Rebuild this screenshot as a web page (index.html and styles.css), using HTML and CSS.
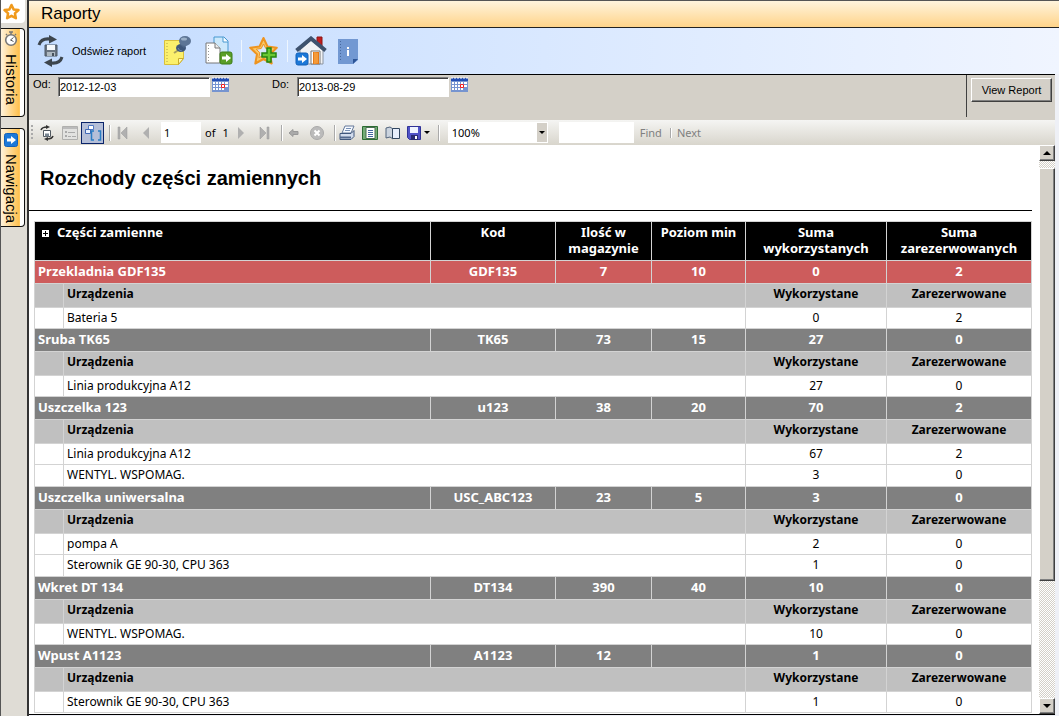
FILE: index.html
```
<!DOCTYPE html>
<html lang="pl">
<head>
    <meta charset="UTF-8">
    <meta name="viewport" content="width=device-width, initial-scale=1.0">
    <title>Raporty</title>
    <link rel="stylesheet" href="styles.css">
</head>
<body>
    <div class="app">
        <nav class="side">
            <button type="button" class="fav" aria-label="Ulubione">
                <svg width="20" height="18" viewBox="0 0 20 18"><path d="M9.500 2l2.100 4.400 4.900.6-3.600 3.300 1 4.900-4.400-2.400-4.400 2.400 1-4.900L2.500 7l4.900-.6z" fill="#fff" stroke="#f09a1c" stroke-width="2.500" stroke-linejoin="round"/></svg>
            </button>
            <button type="button" class="tab">
                <svg width="14" height="16" viewBox="0 0 14 16"><path d="M5 1h4M7 1v3M2 3l1 1M12 3l-1 1" stroke="#777" stroke-width="1.500"/><circle cx="7" cy="9" r="5.300" fill="#fff" stroke="#777" stroke-width="1.600"/><path d="M9.500 6.500L6.500 9l3 1.500" fill="none" stroke="#555"/></svg>
                <span>Historia</span>
            </button>
            <button type="button" class="tab">
                <svg width="14" height="14" viewBox="0 0 14 14"><rect x=".5" y=".5" width="13" height="13" rx="2" fill="#1c78d8" stroke="#1360b8"/><path d="M3 5.500h4V3l5 4-5 4V8.500H3z" fill="#fff"/></svg>
                <span>Nawigacja</span>
            </button>
        </nav>
        <div class="main">
            <h1 class="title">Raporty</h1>
            <div class="actions">
                <button type="button" class="refresh">
                    <svg width="28" height="32" viewBox="0 0 28 32">
                        <path d="M2 10Q4 3 13 4" fill="none" stroke="#3c454d" stroke-width="3"/><path d="M12 0l8 4.500-8 4z" fill="#3c454d"/>
                        <path d="M25 22q-2 7-11 6" fill="none" stroke="#3c454d" stroke-width="3"/><path d="M15 32l-8-4.500 8-4z" fill="#3c454d"/>
                        <path d="M8 10h12v11H8z" fill="#687380" stroke="#4c5864"/><path d="M10 10h8v5h-8z" fill="#f4f8fb"/><path d="M10 17h8v4h-8z" fill="#aeb9c2"/><path d="M15 18h2v3h-2z" fill="#46515c"/>
                    </svg>
                    <span>Odśwież raport</span>
                </button>
                <button type="button" class="act note" aria-label="Notatka">
                    <svg width="30" height="32" viewBox="0 0 30 32">
                        <path d="M.5 5.500h19v18l-5 6H.5z" fill="#fbf06c" stroke="#d8bf3c"/><path d="M19.500 23.500h-5v6z" fill="#fff9b0" stroke="#c9ac2d"/>
                        <path d="M3 8v20" stroke="#b8a345" stroke-dasharray="1 2"/>
                        <path d="M10 18l6-4" stroke="#aaa25c" stroke-width="2"/><ellipse cx="17" cy="13" rx="5" ry="4" fill="#3f577a"/><path d="M16 10l1-6 7 5-4 4z" fill="#4e6688"/><ellipse cx="21" cy="6" rx="6" ry="5" fill="#5d7596"/><ellipse cx="20" cy="4" rx="3" ry="1.500" fill="#9bb0c8"/><path d="M14 13q1 3 4 3" fill="none" stroke="#6f87a8"/>
                    </svg>
                </button>
                <button type="button" class="act" aria-label="Eksport">
                    <svg width="28" height="30" viewBox="0 0 28 30">
                        <path d="M9 1h10l4 4v17H9z" fill="#cce8fb" stroke="#4798d0"/><path d="M18 1v5h5" fill="#fff" stroke="#4798d0"/>
                        <path d="M1 7h9l5 5v15H1z" fill="#fff" stroke="#777"/><path d="M10 7v5h5" fill="#eee" stroke="#777"/><path d="M3.500 9v16" stroke="#999" stroke-dasharray="1 2"/>
                        <rect x="15" y="16" width="12" height="12" rx="2" fill="#5a9e28" stroke="#3d7d18"/><path d="M17 20.500h4V18l5 4-5 4v-2.500h-4z" fill="#fff"/>
                    </svg>
                </button>
                <i class="split"></i>
                <button type="button" class="act" aria-label="Dodaj do ulubionych">
                    <svg width="30" height="30" viewBox="0 0 30 30">
                        <path d="M14.500 2l4 8.500 9.300 1.200-6.800 6.500 1.700 9.300-8.200-4.500-8.200 4.500L8 18.200l-6.800-6.500 9.300-1.200z" fill="#fbc868" stroke="#ee9420" stroke-width="2" stroke-linejoin="round"/>
                        <path d="M14.500 8l2.300 4.500 5 .7-3.600 3.500.9 5-4.600-2.400-4.600 2.400.9-5-3.600-3.500 5-.7z" fill="#d8e8fa" stroke="#ee9420"/>
                        <path d="M18 12h4v5h5v4h-5v5h-4v-5h-5v-4h5z" fill="#69c832" stroke="#268313" stroke-width="1.500"/>
                    </svg>
                </button>
                <i class="split"></i>
                <button type="button" class="act home" aria-label="Strona główna">
                    <svg width="32" height="30" viewBox="0 0 32 30">
                        <path d="M22 1h5v9h-5z" fill="#c31d1d" stroke="#8b1616"/><path d="M5 14L16 4l12 10v14H5z" fill="#f1f2f5" stroke="#8b94a0"/>
                        <path d="M1.500 14.500L16 2.500l14.500 12" fill="none" stroke="#3e526e" stroke-width="4"/>
                        <path d="M16 15h9v13h-9z" fill="#fff" stroke="#777"/><path d="M18 16h6v12h-6z" fill="#e67a16"/><path d="M19 16l4 1v10l-4 1z" fill="#f49a39"/>
                        <rect x="1" y="17" width="12" height="12" rx="2" fill="#1c78d8" stroke="#1360b8"/><path d="M3 21.500h4V19l5 4-5 4v-2.500H3z" fill="#fff"/>
                    </svg>
                </button>
                <button type="button" class="act" aria-label="Informacje">
                    <svg width="20" height="27" viewBox="0 0 20 27"><path d="M0 1h20v21l-5 4H0z" fill="#7298d2"/><path d="M20 21h-5v5z" fill="#2d5597"/><path d="M2.500 3v21" stroke="#47699e" stroke-dasharray="1 2"/><path d="M9 9h2v2H9zM9 12h2v6H9z" fill="#fff"/></svg>
                </button>
            </div>
            <div class="viewer">
                <form class="params">
                    <div class="fields">
                        <label for="from">Od:</label>
                        <input type="text" id="from" value="2012-12-03">
                        <svg width="17" height="15" viewBox="0 0 17 15"><path d="M0 2h17v13H0z" fill="#7694d0"/><path d="M0 1h17v3H0z" fill="#244fb5"/><path d="M1 0v2M4 0v2M7 0v2M10 0v2M13 0v2M16 0v2" stroke="#fff"/><path d="M1 5h2v2H1zM4 5h2v2H4zM7 5h2v2H7zM10 5h2v2h-2zM13 5h3v2h-3zM1 8h2v2H1zM4 8h2v2H4zM7 8h2v2H7zM13 8h3v2h-3zM1 11h2v2H1zM4 11h2v2H4zM7 11h2v2H7zM10 11h2v2h-2z" fill="#fff"/><path d="M9.500 7.500h3v3h-3z" fill="#fff" stroke="#f02020"/></svg>
                        <label for="to" class="second">Do:</label>
                        <input type="text" id="to" value="2013-08-29">
                        <svg width="17" height="15" viewBox="0 0 17 15"><path d="M0 2h17v13H0z" fill="#7694d0"/><path d="M0 1h17v3H0z" fill="#244fb5"/><path d="M1 0v2M4 0v2M7 0v2M10 0v2M13 0v2M16 0v2" stroke="#fff"/><path d="M1 5h2v2H1zM4 5h2v2H4zM7 5h2v2H7zM10 5h2v2h-2zM13 5h3v2h-3zM1 8h2v2H1zM4 8h2v2H4zM7 8h2v2H7zM13 8h3v2h-3zM1 11h2v2H1zM4 11h2v2H4zM7 11h2v2H7zM10 11h2v2h-2z" fill="#fff"/><path d="M9.500 7.500h3v3h-3z" fill="#fff" stroke="#f02020"/></svg>
                    </div>
                    <div class="submit">
                        <button type="button">View Report</button>
                    </div>
                </form>
                <div class="toolbar">
                    <i class="grip"></i>
                    <button type="button" class="tool" aria-label="Refresh">
                        <svg width="16" height="16" viewBox="0 0 16 16"><path d="M2 5q1-3 6-3M14 11q-1 3-6 3" fill="none" stroke="#333" stroke-width="1.500"/><path d="M7 0l4 2-4 2zM9 12l-4 2 4 2z" fill="#333"/><path d="M4.500 5.500h7v6h-7z" fill="#fff" stroke="#50585f"/><path d="M6 8.500h4v3H6z" fill="#788590"/></svg>
                    </button>
                    <button type="button" class="tool" aria-label="Document map">
                        <svg width="16" height="16" viewBox="0 0 16 16"><path d="M.5 1.500h15v13H.5z" fill="#e2e2e0" stroke="#b0b0ae"/><path d="M1 2h14v2H1z" fill="#bbb"/><path d="M3 6h2v2H3zM3 10h2v2H3z" fill="#aaa"/><path d="M6 7.500h7M6 11.500h3M10 11.500h4" stroke="#aaa"/></svg>
                    </button>
                    <button type="button" class="tool pressed" aria-label="Parameters">
                        <svg width="18" height="18" viewBox="0 0 18 18"><path d="M4.500 1.500h5v4h-5z" fill="#fff" stroke="#537bc5"/><path d="M1.500 5.500h5v4h-5z" fill="#e7f0ff" stroke="#4169b5"/><path d="M10 7H7.500v9H10M14 7h2.500v9H14" fill="none" stroke="#2a7dc4" stroke-width="1.500"/></svg>
                    </button>
                    <i class="bar"></i>
                    <button type="button" class="tool" aria-label="First page"><svg width="16" height="14" viewBox="0 0 16 14"><path d="M3 1h2v12H3zM12 1v12L6 7z" fill="#b0b0b0" stroke="#999" stroke-width=".5"/></svg></button>
                    <button type="button" class="tool" aria-label="Previous page"><svg width="16" height="14" viewBox="0 0 16 14"><path d="M11 1v12L5 7z" fill="#b0b0b0"/></svg></button>
                    <input type="text" class="page" value="1" aria-label="Page">
                    <span class="of">of</span>
                    <span class="count">1</span>
                    <button type="button" class="tool" aria-label="Next page"><svg width="16" height="14" viewBox="0 0 16 14"><path d="M5 1v12l6-6z" fill="#b0b0b0"/></svg></button>
                    <button type="button" class="tool" aria-label="Last page"><svg width="16" height="14" viewBox="0 0 16 14"><path d="M4 1v12l6-6zM11 1h2v12h-2z" fill="#b0b0b0" stroke="#999" stroke-width=".5"/></svg></button>
                    <i class="bar"></i>
                    <button type="button" class="tool" aria-label="Back"><svg width="16" height="14" viewBox="0 0 16 14"><path d="M3 7l4-3.500V5.500h5v3H7v2z" fill="#aaa" stroke="#999"/></svg></button>
                    <button type="button" class="tool" aria-label="Stop"><svg width="16" height="16" viewBox="0 0 16 16"><circle cx="8" cy="8" r="6.500" fill="#bbb" stroke="#aaa"/><path d="M5.500 5.500l5 5M10.500 5.500l-5 5" stroke="#fff" stroke-width="2"/></svg></button>
                    <i class="bar"></i>
                    <button type="button" class="tool" aria-label="Print"><svg width="16" height="16" viewBox="0 0 16 16"><path d="M6 1h9l-3 7H3z" fill="#f5f9ff" stroke="#65799a"/><path d="M7 3.500h5M6 5.500h5" stroke="#7890b5"/><path d="M1 8.500h11l3-3v6l-3 3H1z" fill="#d2dced" stroke="#40577d"/><path d="M1 11.500h11v2H1z" fill="#52688d"/></svg></button>
                    <button type="button" class="tool" aria-label="Print layout"><svg width="16" height="16" viewBox="0 0 16 16"><path d="M.5 1.500h15v13H.5z" fill="#74ad77" stroke="#2c6c33"/><path d="M4 2.500h9v11H4z" fill="#fff" stroke="#496c51"/><path d="M6 5.500h5M6 7.500h5M6 9.500h5M6 11.500h5" stroke="#4467a0"/></svg></button>
                    <button type="button" class="tool" aria-label="Page setup"><svg width="16" height="14" viewBox="0 0 16 14"><path d="M1 2l4-1 3 2v10l-3-2-4 1z" fill="#cbd4df" stroke="#52647c"/><path d="M7.500 2.500h7v10h-7z" fill="#e6eefc" stroke="#31465f"/></svg></button>
                    <button type="button" class="tool export" aria-label="Export">
                        <svg width="14" height="14" viewBox="0 0 14 14"><path d="M.5.5h13v13h-11l-2-2z" fill="#5053c7" stroke="#303397"/><path d="M3 1h8v6H3z" fill="#eff4ff"/><path d="M4 9h7v5H4z" fill="#292c72"/><path d="M8 10h2v3H8z" fill="#fff"/></svg>
                        <svg width="6" height="4" viewBox="0 0 6 4"><path d="M0 0h6L3 3z"/></svg>
                    </button>
                    <i class="bar last"></i>
                    <div class="zoom">
                        <select aria-label="Zoom"><option>100%</option></select>
                        <span class="arrow"><svg width="6" height="4" viewBox="0 0 6 4"><path d="M0 0h6L3 3z"/></svg></span>
                    </div>
                    <input type="text" class="search" aria-label="Find text">
                    <a href="#">Find</a>
                    <i class="thin"></i>
                    <a href="#">Next</a>
                </div>
                <div class="body">
                    <div class="report">
                        <h2>Rozchody części zamiennych</h2>
                        <table>
                            <colgroup>
                                <col class="indent"><col><col class="code"><col class="stock"><col class="minimum"><col class="used"><col class="reserved">
                            </colgroup>
                            <thead>
                                <tr>
                                    <th colspan="2" class="name"><svg width="7" height="7" viewBox="0 0 7 7"><path d="M0 0h7v7H0z" fill="#fff"/><path d="M1 3h5v1H1zM3 1h1v5H3z"/></svg>Części zamienne</th>
                                    <th>Kod</th>
                                    <th>Ilość w magazynie</th>
                                    <th>Poziom min</th>
                                    <th>Suma wykorzystanych</th>
                                    <th>Suma zarezerwowanych</th>
                                </tr>
                            </thead>
                            <tbody>
                                <tr class="part low"><td colspan="2">Przekladnia GDF135</td><td>GDF135</td><td>7</td><td>10</td><td>0</td><td>2</td></tr>
                                <tr class="sub"><td></td><td colspan="4">Urządzenia</td><td>Wykorzystane</td><td>Zarezerwowane</td></tr>
                                <tr class="item"><td></td><td colspan="4">Bateria 5</td><td>0</td><td>2</td></tr>

                                <tr class="part"><td colspan="2">Sruba TK65</td><td>TK65</td><td>73</td><td>15</td><td>27</td><td>0</td></tr>
                                <tr class="sub"><td></td><td colspan="4">Urządzenia</td><td>Wykorzystane</td><td>Zarezerwowane</td></tr>
                                <tr class="item"><td></td><td colspan="4">Linia produkcyjna A12</td><td>27</td><td>0</td></tr>

                                <tr class="part"><td colspan="2">Uszczelka 123</td><td>u123</td><td>38</td><td>20</td><td>70</td><td>2</td></tr>
                                <tr class="sub"><td></td><td colspan="4">Urządzenia</td><td>Wykorzystane</td><td>Zarezerwowane</td></tr>
                                <tr class="item"><td></td><td colspan="4">Linia produkcyjna A12</td><td>67</td><td>2</td></tr>
                                <tr class="item"><td></td><td colspan="4">WENTYL. WSPOMAG.</td><td>3</td><td>0</td></tr>

                                <tr class="part"><td colspan="2">Uszczelka uniwersalna</td><td>USC_ABC123</td><td>23</td><td>5</td><td>3</td><td>0</td></tr>
                                <tr class="sub"><td></td><td colspan="4">Urządzenia</td><td>Wykorzystane</td><td>Zarezerwowane</td></tr>
                                <tr class="item"><td></td><td colspan="4">pompa A</td><td>2</td><td>0</td></tr>
                                <tr class="item"><td></td><td colspan="4">Sterownik GE 90-30, CPU 363</td><td>1</td><td>0</td></tr>

                                <tr class="part"><td colspan="2">Wkret DT 134</td><td>DT134</td><td>390</td><td>40</td><td>10</td><td>0</td></tr>
                                <tr class="sub"><td></td><td colspan="4">Urządzenia</td><td>Wykorzystane</td><td>Zarezerwowane</td></tr>
                                <tr class="item"><td></td><td colspan="4">WENTYL. WSPOMAG.</td><td>10</td><td>0</td></tr>

                                <tr class="part"><td colspan="2">Wpust A1123</td><td>A1123</td><td>12</td><td></td><td>1</td><td>0</td></tr>
                                <tr class="sub"><td></td><td colspan="4">Urządzenia</td><td>Wykorzystane</td><td>Zarezerwowane</td></tr>
                                <tr class="item"><td></td><td colspan="4">Sterownik GE 90-30, CPU 363</td><td>1</td><td>0</td></tr>
                            </tbody>
                        </table>
                    </div>
                    <div class="scroll">
                        <button type="button" aria-label="Scroll up"><svg width="8" height="4" viewBox="0 0 8 4"><path d="M0 4h8L4 0z"/></svg></button>
                        <div class="track"><div class="thumb"></div></div>
                        <button type="button" aria-label="Scroll down"><svg width="8" height="4" viewBox="0 0 8 4"><path d="M0 0h8L4 4z"/></svg></button>
                    </div>
                </div>
            </div>
        </div>
    </div>
</body>
</html>
```
FILE: styles.css
```
*{
    box-sizing: border-box;
}
body{
    margin: 0px;
    background-color: #eef0f6;
    font-family: "Noto Sans", sans-serif;
    font-size: 11px;
    color: black;
}
button{
    padding: 0px;
    border: none;
    background: none;
    font-family: inherit;
    font-size: inherit;
    color: black;
}
svg{
    display: block;
    flex-shrink: 0;
}
h1, h2{
    margin: 0px;
}
.app{
    display: flex;
    height: 100vh;
    overflow: hidden;
}
.side, .title, .actions, .params{
    font-family: "Liberation Sans", sans-serif;
}

/* left tabs */
.side{
    flex: 0 0 29px;
    display: flex;
    flex-direction: column;
    align-items: flex-start;
    background-color: #dfdcd5;
    border-left: 1px solid #555;
    border-right: 2px solid #333;
}
.fav{
    width: 24px;
    height: 23px;
    padding: 2px 1px;
    margin-bottom: 5px;
    background-color: white;
    border-radius: 0px 0px 4px 0px;
}
.tab{
    display: flex;
    flex-direction: column;
    align-items: center;
    gap: 7px;
    width: 24px;
    height: 89px;
    padding: 2px 3px 0px 0px;
    margin-bottom: 11px;
    border: solid #111;
    border-width: 1px 1px 1px 0px;
    border-radius: 0px 4px 4px 0px;
    background: linear-gradient(to right, #fff3dc, #ffc04c 80%, white 84%);
    font-size: 15px;
}
.tab + .tab{
    height: 99px;
    padding-top: 4px;
}
.tab span{
    writing-mode: vertical-rl;
    line-height: 18px;
}

.main{
    flex: 1;
    min-width: 0;
    display: flex;
    flex-direction: column;
}
.title{
    height: 28px;
    padding-left: 12px;
    border-top: 1px solid #555;
    border-bottom: 1px solid #222;
    background: linear-gradient(#fff4dd, #ffd48a);
    font-size: 17px;
    font-weight: normal;
    line-height: 26px;
}
.actions{
    display: flex;
    align-items: center;
    height: 46px;
    padding-left: 8px;
    background: linear-gradient(to right, #c2dbff, #f0f5ff);
}
.refresh{
    display: flex;
    align-items: center;
    gap: 7px;
    margin-right: 18px;
}
.act{
    margin-right: 8px;
}
.note, .home{
    margin-right: 11px;
}
.split{
    width: 1px;
    height: 22px;
    margin-right: 7px;
    background-color: #eef6ff;
}
.viewer{
    flex: 1;
    min-height: 0;
    display: flex;
    flex-direction: column;
    margin-right: 4px;
    margin-bottom: 1px;
    border-bottom: 1px solid black;
}

/* parameters */
.params{
    display: flex;
    justify-content: space-between;
    height: 46px;
    background-color: #d4d0c8;
    border-top: 1px solid black;
}
.fields{
    display: flex;
    align-items: flex-start;
    gap: 2px;
    padding: 2px 4px;
}
.fields label{
    width: 23px;
    line-height: 15px;
}
.fields .second{
    margin-left: 41px;
}
.fields input{
    width: 152px;
    height: 20px;
    padding: 0px 1px;
    border: 1px solid;
    border-color: #808080 white white #808080;
    box-shadow: inset 1px 1px #404040;
    font: inherit;
}
.submit{
    height: 42px;
    padding: 3px 3px 0px 4px;
    border-left: 1px solid #404040;
}
.submit button{
    width: 81px;
    height: 24px;
    background-color: #d4d0c8;
    border: 1px solid;
    border-color: white #404040 #404040 white;
    box-shadow: inset -1px -1px #808080;
}

/* viewer toolbar */
.toolbar{
    display: flex;
    align-items: center;
    height: 25px;
    background: linear-gradient(#f5f5f3, #d8d5cc);
}
.grip{
    width: 2px;
    height: 16px;
    margin: 0px 2px;
    background: repeating-linear-gradient(#aaa 0px, #aaa 2px, transparent 2px, transparent 4px);
}
.tool{
    display: flex;
    align-items: center;
    justify-content: center;
    width: 23px;
    height: 22px;
}
.pressed{
    background-color: #b5bfd8;
    border: 1px solid #0a246a;
}
.bar{
    width: 2px;
    height: 16px;
    margin-left: 5px;
    background: linear-gradient(to right, #aaa 50%, white 50%);
}
.page{
    width: 40px;
    height: 21px;
    margin-left: 4px;
    padding: 0px 3px;
    border: none;
    font: inherit;
}
.of{
    margin: 0px 7px 0px 4px;
}
.count{
    margin-right: 1px;
}
.export{
    gap: 3px;
    width: 28px;
}
.last{
    margin-right: 8px;
}
.zoom{
    position: relative;
}
.zoom select{
    appearance: none;
    display: block;
    width: 100px;
    height: 21px;
    padding: 0px 4px;
    border: none;
    border-radius: 0px;
    background-color: white;
    font: inherit;
}
.arrow{
    position: absolute;
    top: 1px;
    right: 1px;
    display: flex;
    align-items: center;
    justify-content: center;
    width: 10px;
    height: 19px;
    background-color: #d4d0c8;
    pointer-events: none;
}
.search{
    width: 75px;
    height: 21px;
    margin: 0px 6px 0px 11px;
    border: none;
}
.toolbar a{
    color: #808080;
    text-decoration: none;
}
.thin{
    width: 2px;
    height: 10px;
    margin: 0px 5px 0px 8px;
    background: linear-gradient(to right, #aaa 50%, white 50%);
}

/* report */
.body{
    flex: 1;
    min-height: 0;
    display: flex;
}
.report{
    flex: 1;
    min-width: 0;
    overflow: hidden;
    padding-right: 7px;
    background-color: white;
}
.report h2{
    height: 66px;
    padding-left: 11px;
    margin-bottom: 10px;
    border-bottom: 1px solid black;
    font-family: "Liberation Sans", sans-serif;
    font-size: 20px;
    line-height: 66px;
}
table{
    width: calc(100% - 5px);
    margin-left: 5px;
    table-layout: fixed;
    border-collapse: collapse;
}
.indent{
    width: 29px;
}
.code{
    width: 125px;
}
.stock{
    width: 96px;
}
.minimum{
    width: 94px;
}
.used{
    width: 141px;
}
.reserved{
    width: 145px;
}
th, td{
    padding: 0px 3px;
    border: 1px solid #d3d3d3;
    text-align: center;
    vertical-align: top;
    white-space: nowrap;
}
th{
    height: 39px;
    padding: 2px 3px;
    background-color: black;
    color: white;
    font-size: 13px;
    line-height: 16px;
    white-space: normal;
}
.name{
    text-align: left;
}
.name svg{
    display: inline-block;
    margin: 0px 8px 0px 4px;
}
.part td{
    height: 23px;
    background-color: #808080;
    color: white;
    font-size: 13px;
    font-weight: bold;
    line-height: 20px;
}
.low td{
    background-color: #cd5c5c;
}
.sub td{
    height: 24px;
    background-color: #c0c0c0;
    font-size: 12px;
    font-weight: bold;
    line-height: 20px;
}
.item td{
    height: 21px;
    font-size: 12px;
    line-height: 20px;
}
.item + .item td{
    height: 22px;
}
.part td:first-child, .item td:nth-child(2), .sub td:nth-child(2){
    text-align: left;
}

/* scroll bar */
.scroll{
    flex: 0 0 16px;
    display: flex;
    flex-direction: column;
}
.scroll button, .thumb{
    background-color: #d4d0c8;
    border: 1px solid;
    border-color: white #404040 #404040 white;
    box-shadow: inset -1px -1px #808080;
}
.scroll button{
    display: flex;
    align-items: center;
    justify-content: center;
    height: 16px;
}
.track{
    flex: 1;
    padding-top: 7px;
    background: repeating-conic-gradient(#d4d0c8 0% 25%, white 0% 50%) 0px 0px / 2px 2px;
}
.thumb{
    height: 78%;
}
```
